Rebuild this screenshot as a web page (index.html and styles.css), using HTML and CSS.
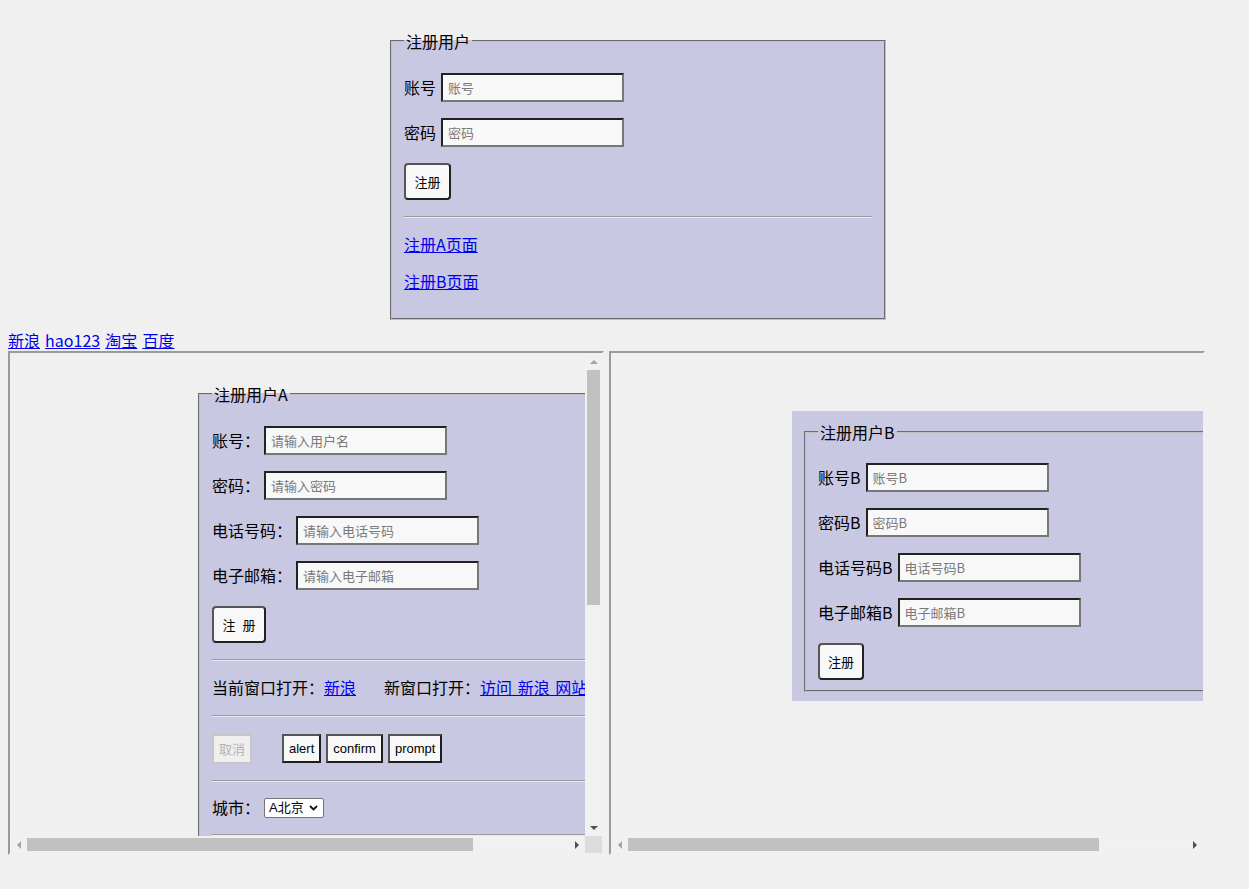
FILE: index.html
```html
<!DOCTYPE html>
<html lang="zh-CN">
<head>
<meta charset="utf-8">
<title>注册用户</title>
<link rel="stylesheet" href="styles.css">
</head>
<body>
<fieldset class="fs fs-main">
  <legend class="lg">注册用户</legend>
  <div class="stack">
    <div class="row"><span class="lbl">账号</span><input class="inp" type="text" placeholder="账号"></div>
    <div class="row"><span class="lbl">密码</span><input class="inp" type="text" placeholder="密码"></div>
    <div class="row-btn"><button class="btn btn-main">注册</button></div>
    <hr class="rule">
    <div class="line"><a href="#">注册A页面</a></div>
    <div class="line"><a href="#">注册B页面</a></div>
  </div>
</fieldset>

<nav class="links"><a href="#">新浪</a> <a href="#">hao123</a> <a href="#">淘宝</a> <a href="#">百度</a></nav>

<div class="frames">
  <div class="frame frame-a">
    <div class="viewport">
      <fieldset class="fs fs-a">
        <legend class="lg">注册用户A</legend>
        <div class="stack">
          <div class="row row-a"><span class="lbl">账号：</span><input class="inp" type="text" placeholder="请输入用户名"></div>
          <div class="row row-a"><span class="lbl">密码：</span><input class="inp" type="text" placeholder="请输入密码"></div>
          <div class="row row-a"><span class="lbl">电话号码：</span><input class="inp" type="text" placeholder="请输入电话号码"></div>
          <div class="row row-a"><span class="lbl">电子邮箱：</span><input class="inp" type="text" placeholder="请输入电子邮箱"></div>
          <div class="row-btn"><button class="btn btn-wide">注&nbsp;&nbsp;册</button></div>
          <hr class="rule">
          <div class="line line-open"><span>当前窗口打开：</span><a href="#">新浪</a><span class="open-new">新窗口打开：</span><a href="#" class="wide-link">访问 新浪 网站</a></div>
          <hr class="rule">
          <div class="btnrow">
            <button class="sbtn sbtn-off" disabled>取消</button>
            <button class="sbtn">alert</button>
            <button class="sbtn">confirm</button>
            <button class="sbtn">prompt</button>
          </div>
          <hr class="rule">
          <div class="row-sel"><span class="lbl">城市：</span>
            <span class="sel"><span class="sel-text">A北京</span><svg class="chev" width="9" height="6" viewBox="0 0 9 6"><path d="M1 1 L4.5 4.5 L8 1" fill="none" stroke="#111" stroke-width="1.8"/></svg></span>
          </div>
          <hr class="rule">
          <div class="line">&nbsp;</div>
        </div>
      </fieldset>
    </div>
    <div class="vbar">
      <div class="sb-btn"><span class="tri tri-up"></span></div>
      <div class="vtrack"><div class="vthumb"></div></div>
      <div class="sb-btn"><span class="tri tri-down"></span></div>
    </div>
    <div class="hbar">
      <div class="sb-btn"><span class="tri tri-left"></span></div>
      <div class="htrack"><div class="hthumb hthumb-a"></div></div>
      <div class="sb-btn"><span class="tri tri-right"></span></div>
    </div>
    <div class="corner"></div>
  </div>

  <div class="frame frame-b">
    <div class="viewport">
      <div class="boxb">
        <fieldset class="fs fs-b">
          <legend class="lg">注册用户B</legend>
          <div class="stack">
            <div class="row"><span class="lbl">账号B</span><input class="inp" type="text" placeholder="账号B"></div>
            <div class="row"><span class="lbl">密码B</span><input class="inp" type="text" placeholder="密码B"></div>
            <div class="row"><span class="lbl">电话号码B</span><input class="inp" type="text" placeholder="电话号码B"></div>
            <div class="row"><span class="lbl">电子邮箱B</span><input class="inp" type="text" placeholder="电子邮箱B"></div>
            <div class="row-btn"><button class="btn btn-b">注册</button></div>
          </div>
        </fieldset>
      </div>
    </div>
    <div class="hbar">
      <div class="sb-btn"><span class="tri tri-left"></span></div>
      <div class="htrack"><div class="hthumb hthumb-b"></div></div>
      <div class="sb-btn"><span class="tri tri-right"></span></div>
    </div>
  </div>
</div>
</body>
</html>
```
FILE: styles.css
```css
html, body {
  background: #f0f0f0;
}
body {
  margin: 0;
  padding: 8px;
  font-family: "Noto Sans CJK SC", sans-serif;
  font-size: 16px;
  line-height: 20px;
  color: #000;
}
a {
  color: #0000ee;
  text-decoration: underline;
}

/* fieldsets */
.fs {
  margin: 0;
  border: 2px groove #c0c0c0;
  background: #c8c8e2;
  padding: 23px 12px 24px 12px;
  min-width: 0;
  box-sizing: border-box;
}
.lg {
  padding: 0 2px;
  font-size: 16px;
  line-height: 18px;
}
.fs-main {
  width: 496px;
  margin: 24px 0 0 382px;
  padding-bottom: 26px;
}
.stack {
  display: flex;
  flex-direction: column;
  gap: 16px;
}
.row {
  display: flex;
  align-items: center;
  height: 29px;
  gap: 5px;
  white-space: nowrap;
}
.row-a {
  gap: 4px;
}
.lbl {
  white-space: nowrap;
  padding-bottom: 2px;
}
.inp {
  width: 183px;
  height: 29px;
  box-sizing: border-box;
  margin: 0;
  border: 2px solid;
  border-color: #222 #777 #777 #222;
  background: #f8f8f8;
  padding: 0 5px;
  font-family: "Noto Sans CJK SC", sans-serif;
  font-size: 13px;
  outline: none;
  flex: none;
}
.inp::placeholder {
  color: #7a7a7a;
}
.row-btn {
  display: flex;
  height: 37px;
}
.btn {
  height: 37px;
  box-sizing: border-box;
  margin: 0;
  padding: 0;
  border: 2px solid #333;
  border-color: #555 #222 #222 #555;
  border-radius: 4px;
  background: #f8f8f8;
  font-family: "Liberation Sans", "Noto Sans CJK SC", sans-serif;
  font-size: 13px;
  color: #000;
}
.btn-main { width: 47px; }
.btn-wide { width: 54px; }
.btn-b { width: 46px; }
.rule {
  margin: 0;
  height: 0;
  border: 0;
  border-top: 1px solid #9c9c9c;
  border-bottom: 1px solid #e8e8f2;
}
.line {
  height: 21px;
  line-height: 21px;
  white-space: nowrap;
}
.line-open {
  height: 22px;
  line-height: 20px;
}
.open-new {
  margin-left: 28px;
}
.wide-link {
  word-spacing: 2px;
}

/* small buttons */
.btnrow {
  display: flex;
  align-items: center;
  height: 31px;
  gap: 5px;
}
.sbtn {
  height: 29px;
  box-sizing: border-box;
  margin: 0;
  padding: 0 5px;
  border: 2px solid;
  border-color: #555 #1e1e1e #1e1e1e #555;
  background: #f8f8f8;
  font-family: "Liberation Sans", "Noto Sans CJK SC", sans-serif;
  font-size: 13px;
  color: #000;
}
.sbtn-off {
  height: 30px;
  width: 40px;
  margin-right: 25px;
  border-color: #c6c6c6;
  background: #efefef;
  color: #b4b4b4;
}

/* select */
.row-sel {
  display: flex;
  align-items: center;
  height: 20px;
  gap: 4px;
}
.sel {
  display: flex;
  align-items: center;
  justify-content: space-between;
  width: 60px;
  height: 20px;
  box-sizing: border-box;
  border: 1px solid #767676;
  border-radius: 2px;
  background: #fff;
  padding: 0 5px 0 4px;
  font-family: "Liberation Sans", "Noto Sans CJK SC", sans-serif;
  font-size: 13px;
  line-height: 18px;
}
.chev {
  display: block;
}

/* links row */
.links {
  margin-top: 11px;
  height: 20px;
  line-height: 19px;
  white-space: nowrap;
  word-spacing: 1.5px;
}

/* frames */
.frames {
  display: flex;
  gap: 5px;
}
.frame {
  width: 596px;
  height: 504px;
  box-sizing: border-box;
  border: 2px solid;
  border-color: #9a9a9a #f0f0f0 #f0f0f0 #9a9a9a;
  background: #f0f0f0;
  display: grid;
  grid-template-columns: minmax(0, 1fr) 17px;
  grid-template-rows: minmax(0, 1fr) 17px;
  flex: none;
}
.frame-b {
  grid-template-columns: minmax(0, 1fr);
}
.viewport {
  overflow: hidden;
  min-width: 0;
  min-height: 0;
  background: #f0f0f0;
}
.fs-a {
  margin: 32px 0 0 188px;
  width: 560px;
  padding-bottom: 40px;
}
.boxb {
  margin: 58px 0 0 181px;
  width: 620px;
  box-sizing: border-box;
  background: #c8c8e2;
  padding: 12px 12px 9px 12px;
}
.fs-b {
  background: transparent;
  padding: 22px 12px 10px 12px;
}

/* scrollbars */
.vbar {
  display: flex;
  flex-direction: column;
  background: #f1f1f1;
}
.hbar {
  display: flex;
  background: #f1f1f1;
}
.sb-btn {
  width: 17px;
  height: 17px;
  flex: none;
  display: flex;
  align-items: center;
  justify-content: center;
}
.vtrack {
  flex: 1;
}
.vthumb {
  margin: 0 2px;
  height: 235px;
  background: #c1c1c1;
}
.htrack {
  flex: 1;
  display: flex;
  align-items: center;
}
.hthumb {
  height: 13px;
  background: #c1c1c1;
}
.hthumb-a { width: 446px; }
.hthumb-b { width: 471px; }
.corner {
  background: #dcdcdc;
}
.tri {
  width: 0;
  height: 0;
  display: block;
}
.tri-up {
  border-left: 4px solid transparent;
  border-right: 4px solid transparent;
  border-bottom: 4px solid #a3a3a3;
}
.tri-down {
  border-left: 4px solid transparent;
  border-right: 4px solid transparent;
  border-top: 4px solid #505050;
}
.tri-left {
  border-top: 4px solid transparent;
  border-bottom: 4px solid transparent;
  border-right: 4px solid #a3a3a3;
}
.tri-right {
  border-top: 4px solid transparent;
  border-bottom: 4px solid transparent;
  border-left: 4px solid #505050;
}
```
